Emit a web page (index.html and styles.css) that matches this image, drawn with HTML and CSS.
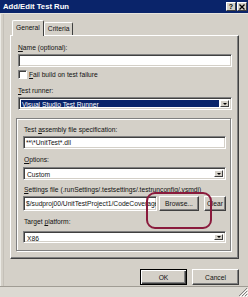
FILE: index.html
```html
<!DOCTYPE html>
<html>
<head>
<meta charset="utf-8">
<link rel="stylesheet" href="styles.css">
</head>
<body>
<div class="window">
  <div class="titlebar">
    <span class="title">Add/Edit Test Run</span>
    <div class="tb-buttons">
      <span class="tb-btn">?</span>
      <span class="tb-btn">
        <svg width="6" height="6" viewBox="0 0 6 6"><path d="M0.5 0.5L5.5 5.5M5.5 0.5L0.5 5.5" stroke="#000" stroke-width="1.3"/></svg>
      </span>
    </div>
  </div>
  <div class="body">
    <div class="tabs">
      <div class="tab active">General</div>
      <div class="tab">Criteria</div>
    </div>
    <div class="panel">
      <div class="label"><u>N</u>ame (optional):</div>
      <div class="input name-input"></div>
      <div class="check-row"><span class="checkbox"></span><span><u>F</u>ail build on test failure</span></div>
      <div class="label runner-label"><u>T</u>est runner:</div>
      <div class="combo name-input selected"><span class="combo-text">Visual Studio Test Runner</span><span class="drop"></span></div>
      <div class="group">
        <div class="label glabel">Test <u>a</u>ssembly file specification:</div>
        <div class="input ginput"><span class="input-text">**\*UnitTest*.dll</span></div>
        <div class="label glabel g-gap6"><u>O</u>ptions:</div>
        <div class="combo ginput g-gap3"><span class="combo-text">Custom</span><span class="drop"></span></div>
        <div class="label glabel g-gap5"><u>S</u>ettings file (.runSettings/.testsettings/.testrunconfig/.vsmdi)</div>
        <div class="settings-row">
          <div class="input settings-input"><span class="input-text">$/sudproj00/UnitTestProject1/CodeCoverage.runsettings</span></div>
          <div class="btn browse">Browse...</div>
          <div class="btn clear">Clear</div>
        </div>
        <div class="label glabel g-gap6">Target <u>p</u>latform:</div>
        <div class="combo ginput g-gap5 short"><span class="combo-text">X86</span><span class="drop"></span></div>
      </div>
    </div>
    <div class="footer">
      <div class="btn default">OK</div>
      <div class="btn">Cancel</div>
    </div>
  </div>
  <div class="statusbar"></div>
  <svg class="grip" width="10" height="10" viewBox="0 0 10 10">
    <path d="M9 1L1 9M9 4L4 9M9 7L7 9" stroke="#808080" stroke-width="1"/>
    <path d="M10 2L2 10M10 5L5 10M10 8L8 10" stroke="#fff" stroke-width="1"/>
  </svg>
  <div class="annot"></div>
</div>
</body>
</html>
```

FILE: styles.css
```css
html, body {
  margin: 0;
  padding: 0;
  background: #d4d0c8;
}

.window {
  position: relative;
  width: 248px;
  height: 297px;
  background: #d4d0c8;
  overflow: hidden;
  font-family: "Liberation Sans", Arial, sans-serif;
  font-size: 6.7px;
  color: #111;
  box-shadow: inset 1px 0 0 #ecebe6, inset 3px 0 0 #d4d0c8, inset 4px 0 0 #c4c0b8;
}

.titlebar {
  height: 14px;
  background: #0a246a;
  display: flex;
  align-items: center;
  justify-content: space-between;
  padding: 0 1px 0 3px;
  box-sizing: border-box;
  border-bottom: 1px solid #e6e4de;
}

.title {
  color: #fff;
  font-weight: bold;
  font-size: 7.7px;
  line-height: 13px;
}

.tb-buttons {
  display: flex;
  gap: 1px;
}

.tb-btn {
  width: 10px;
  height: 9px;
  box-sizing: border-box;
  background: #d4d0c8;
  border: 1px solid;
  border-color: #fff #404040 #404040 #fff;
  font-size: 7px;
  font-weight: bold;
  line-height: 7px;
  text-align: center;
  color: #000;
  display: flex;
  align-items: center;
  justify-content: center;
}

.body {
  padding: 6px 0 0 10px;
}

.tabs {
  display: flex;
  align-items: flex-end;
  height: 15px;
  margin-left: 2px;
  position: relative;
  z-index: 1;
}

.tab {
  height: 13px;
  box-sizing: border-box;
  border: 1px solid;
  border-color: #fff #404040 transparent #fff;
  border-bottom: none;
  border-radius: 2px 2px 0 0;
  padding: 0 3px;
  line-height: 12px;
  background: #d4d0c8;
}

.tab.active {
  height: 16px;
  margin-bottom: -1px;
  line-height: 14px;
}

.panel {
  width: 229px;
  height: 224px;
  box-sizing: border-box;
  border: 1px solid;
  border-color: #fff #404040 #404040 #fff;
  box-shadow: inset -1px -1px 0 #808080;
  padding: 7px 6px 0 7px;
  display: flex;
  flex-direction: column;
  align-items: flex-start;
}

.label {
  height: 9px;
  line-height: 9px;
  white-space: nowrap;
  margin-bottom: 2px;
}

.input, .combo {
  height: 13px;
  box-sizing: border-box;
  background: #fff;
  border: 1px solid;
  border-color: #808080 #fff #fff #808080;
  box-shadow: inset 1px 1px 0 #404040, inset -1px -1px 0 #d4d0c8;
  overflow: hidden;
  white-space: nowrap;
  display: flex;
  align-items: center;
}

.name-input {
  width: 214px;
}

.input-text {
  padding-left: 2px;
  line-height: 11px;
}

.check-row {
  margin-top: 3px;
  height: 9px;
  display: flex;
  align-items: center;
  gap: 2px;
  line-height: 9px;
}

.checkbox {
  width: 9px;
  height: 9px;
  box-sizing: border-box;
  background: #fff;
  border: 1px solid;
  border-color: #808080 #fff #fff #808080;
  box-shadow: inset 1px 1px 0 #404040;
}

.runner-label {
  margin-top: 7px;
}

.combo {
  padding: 2px;
}

.combo-text {
  flex: 1;
  align-self: stretch;
  line-height: 9px;
  padding-left: 1px;
}

.combo.selected .combo-text {
  background: #0a246a;
  color: #fff;
  margin-right: 1px;
}

.drop {
  width: 9px;
  align-self: stretch;
  box-sizing: border-box;
  background: #d4d0c8;
  border: 1px solid;
  border-color: #fff #404040 #404040 #fff;
  display: flex;
  align-items: center;
  justify-content: center;
}

.drop::after {
  content: "";
  border-left: 2px solid transparent;
  border-right: 2px solid transparent;
  border-top: 2px solid #000;
}

.group {
  margin-top: 8px;
  margin-left: -2px;
  width: 215px;
  height: 133px;
  box-sizing: border-box;
  border: 1px solid #808080;
  box-shadow: inset 1px 1px 0 #fff, 1px 1px 0 #fff;
  padding: 6px 4px 0 6px;
  display: flex;
  flex-direction: column;
  align-items: stretch;
}

.glabel {
  padding-left: 1px;
}

.g-gap6 { margin-top: 6px; }
.g-gap5 { margin-top: 5px; }
.g-gap3 { margin-top: 1px; }

.combo.short {
  height: 12px;
  margin-top: 3px;
}

.settings-row {
  display: flex;
  height: 15px;
  align-items: stretch;
}

.settings-input {
  flex: 1;
  height: 15px;
  margin-right: 2px;
}

.btn {
  box-sizing: border-box;
  background: #d4d0c8;
  border: 1px solid;
  border-color: #fff #404040 #404040 #fff;
  box-shadow: inset -1px -1px 0 #808080;
  display: flex;
  align-items: center;
  justify-content: center;
  white-space: nowrap;
}

.browse {
  width: 40px;
  margin-right: 5px;
}

.clear {
  width: 22px;
}

.footer {
  display: flex;
  justify-content: flex-end;
  gap: 5px;
  margin-top: 10px;
  padding-right: 9px;
}

.footer .btn {
  width: 47px;
  height: 16px;
}

.footer .btn.default {
  border: 1px solid #000;
  box-shadow: inset 1px 1px 0 #fff, inset -1px -1px 0 #404040, inset -2px -2px 0 #808080;
}

.statusbar {
  margin-top: 1px;
  height: 10px;
  border-top: 1px solid #a09c94;
  background: #dcd9d2;
}

.grip {
  position: absolute;
  right: 0;
  bottom: 0;
}

.annot {
  position: absolute;
  left: 146px;
  top: 192px;
  width: 66px;
  height: 37px;
  box-sizing: border-box;
  border: 2px solid #8a1a3c;
  border-radius: 9px;
}
```
